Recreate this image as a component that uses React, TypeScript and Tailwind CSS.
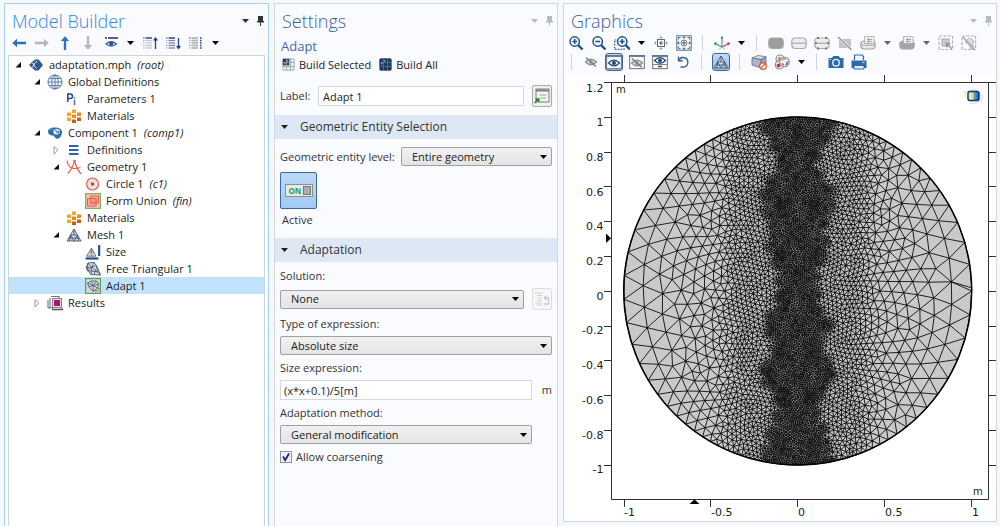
import type { ReactNode } from "react";

/* ---------- mesh generation ---------- */

type Pt = [number, number];

const CX = 797.7;
const CY = 291;
const R = 174;

function lerpTable(table: Pt[], v: number): number {
  if (v <= table[0][0]) return table[0][1];
  for (let i = 1; i < table.length; i++) {
    if (v <= table[i][0]) {
      const [a, fa] = table[i - 1];
      const [b, fb] = table[i];
      return fa + ((fb - fa) * (v - a)) / (b - a);
    }
  }
  return table[table.length - 1][1];
}

// Half width of the finely refined band, by height.
const BAND: Pt[] = [
  [-174, 38], [-150, 26], [-128, 15], [-118, 20], [-100, 34], [-85, 35], [-62, 24],
  [-40, 29], [-22, 18], [0, 19], [14, 17], [32, 32], [50, 22], [62, 24], [80, 36],
  [100, 26], [114, 17], [130, 22], [174, 36],
];

// Edge length outside the band, by distance from the vertical centre line.
const GRADE: Pt[] = [
  [0, 4.2], [60, 4.5], [70, 5.5], [78, 8], [115, 12.5], [145, 18], [174, 24],
];

function edgeLength(x: number, y: number): number {
  const d = Math.abs(x);
  const band = lerpTable(BAND, y) + 2.5 * Math.sin(y * 0.37 + Math.sign(x));
  const outer = lerpTable(GRADE, d);
  const inner = 2.1 + 0.25 * Math.sin(y * 0.13) * Math.cos(x * 0.2);
  if (d < band) return inner;
  if (d < band + 5) return inner + ((outer - inner) * (d - band)) / 5;
  return outer;
}

function seeded(seed: number) {
  let s = seed;
  return () => {
    s = (s * 1664525 + 1013904223) % 4294967296;
    return s / 4294967296;
  };
}

function samplePoints(): { pts: Pt[]; fixed: number } {
  const rand = seeded(7);
  const cell = 6;
  const grid = new Map<number, Pt[]>();
  const key = (x: number, y: number) => Math.floor((x + 200) / cell) * 1000 + Math.floor((y + 200) / cell);
  const pts: Pt[] = [];
  const add = (p: Pt) => {
    pts.push(p);
    const k = key(p[0], p[1]);
    const list = grid.get(k);
    if (list) list.push(p);
    else grid.set(k, [p]);
  };
  const free = (x: number, y: number, r: number) => {
    const n = Math.ceil(r / cell);
    for (let i = -n; i <= n; i++) {
      for (let j = -n; j <= n; j++) {
        const list = grid.get(key(x + i * cell, y + j * cell));
        if (!list) continue;
        for (const q of list) {
          if ((q[0] - x) ** 2 + (q[1] - y) ** 2 < r * r) return false;
        }
      }
    }
    return true;
  };
  let a = 0;
  while (a < Math.PI * 2 - 0.004) {
    const x = R * Math.cos(a);
    const y = R * Math.sin(a);
    add([x, y]);
    a += edgeLength(x, y) / R;
  }
  const fixed = pts.length;
  for (let head = 0; head < pts.length; head++) {
    const [px, py] = pts[head];
    const h = edgeLength(px, py);
    const start = rand() * Math.PI * 2;
    for (let k = 0; k < 24; k++) {
      const t = start + (k * Math.PI) / 12;
      const x = px + h * 1.01 * Math.cos(t);
      const y = py + h * 1.01 * Math.sin(t);
      if (Math.hypot(x, y) > R - h * 0.6) continue;
      if (free(x, y, Math.min(h, edgeLength(x, y)) * 0.95)) add([x, y]);
    }
  }
  return { pts, fixed };
}

interface Tri {
  a: number;
  b: number;
  c: number;
  x: number;
  y: number;
  r: number;
}

function circum(pts: Pt[], a: number, b: number, c: number): Tri {
  const [ax, ay] = pts[a];
  const bx = pts[b][0] - ax;
  const by = pts[b][1] - ay;
  const cx = pts[c][0] - ax;
  const cy = pts[c][1] - ay;
  const d = 2 * (bx * cy - by * cx) || 1e-9;
  const b2 = bx * bx + by * by;
  const c2 = cx * cx + cy * cy;
  const ux = (cy * b2 - by * c2) / d;
  const uy = (bx * c2 - cx * b2) / d;
  return { a, b, c, x: ax + ux, y: ay + uy, r: ux * ux + uy * uy };
}

// Sweeping Delaunay triangulation; returns the unique edges.
function triangulate(input: Pt[]): Pt[] {
  const n = input.length;
  const order = input.map((_, i) => i).sort((i, j) => input[i][1] - input[j][1]);
  const pts: Pt[] = [...input, [-9000, -4000], [9000, -4100], [0, 9000]];
  let open: Tri[] = [circum(pts, n, n + 1, n + 2)];
  const done: Tri[] = [];
  for (const i of order) {
    const [x, y] = pts[i];
    const edges = new Map<number, Pt>();
    const keep: Tri[] = [];
    for (const t of open) {
      const dy = y - t.y;
      if (dy > 0 && dy * dy > t.r) {
        done.push(t);
        continue;
      }
      const dx = x - t.x;
      if (dx * dx + dy * dy > t.r) {
        keep.push(t);
        continue;
      }
      const sides: Pt[] = [[t.a, t.b], [t.b, t.c], [t.c, t.a]];
      for (const [p, q] of sides) {
        const k = Math.min(p, q) * 20000 + Math.max(p, q);
        if (edges.has(k)) edges.delete(k);
        else edges.set(k, [p, q]);
      }
    }
    for (const [p, q] of edges.values()) keep.push(circum(pts, p, q, i));
    open = keep;
  }
  const unique = new Map<number, Pt>();
  for (const t of [...done, ...open]) {
    if (t.a >= n || t.b >= n || t.c >= n) continue;
    const sides: Pt[] = [[t.a, t.b], [t.b, t.c], [t.c, t.a]];
    for (const [p, q] of sides) {
      unique.set(Math.min(p, q) * 20000 + Math.max(p, q), [p, q]);
    }
  }
  return [...unique.values()];
}

function buildMesh(): string {
  const { pts, fixed } = samplePoints();
  let edges = triangulate(pts);
  for (let round = 0; round < 4; round++) {
    const sum = pts.map(() => [0, 0, 0]);
    for (const [p, q] of edges) {
      sum[p][0] += pts[q][0];
      sum[p][1] += pts[q][1];
      sum[p][2]++;
      sum[q][0] += pts[p][0];
      sum[q][1] += pts[p][1];
      sum[q][2]++;
    }
    for (let i = fixed; i < pts.length; i++) {
      if (sum[i][2] > 0) pts[i] = [sum[i][0] / sum[i][2], sum[i][1] / sum[i][2]];
    }
    edges = triangulate(pts);
  }
  return edges
    .map(([p, q]) => {
      const [x1, y1] = pts[p];
      const [x2, y2] = pts[q];
      return `M${(CX + x1).toFixed(1)} ${(CY + y1).toFixed(1)}L${(CX + x2).toFixed(1)} ${(CY + y2).toFixed(1)}`;
    })
    .join("");
}

const MESH = buildMesh();

/* ---------- icons ---------- */

function Svg({ children, size = 16 }: { children: ReactNode; size?: 16 | 13 }) {
  return (
    <svg viewBox="0 0 16 16" className={size === 16 ? "size-4 shrink-0" : "size-[13px] shrink-0"} fill="none" aria-hidden="true">
      {children}
    </svg>
  );
}

function Caret({ className = "text-black" }: { className?: string }) {
  return (
    <svg viewBox="0 0 7 4" className={`h-1 w-[7px] shrink-0 ${className}`} aria-hidden="true">
      <path d="M0 0h7L3.5 4z" fill="currentColor" />
    </svg>
  );
}

function Pin() {
  return (
    <svg viewBox="0 0 7 10" className="h-2.5 w-[7px]" aria-hidden="true">
      <path d="M1 0h5v5h1v1.5H4V10H3V6.500H0V5h1z" fill="currentColor" />
    </svg>
  );
}

const Arrow = ({ turn, color }: { turn: number; color: string }) => (
  <Svg>
    <g transform={`rotate(${turn} 8 8)`} fill={color}>
      <path d="M1.200 8L6 3.800v3h9v2.400H6v3z" />
    </g>
  </Svg>
);

const EyeMenu = () => (
  <Svg>
    <path d="M2 3h2M5 3h10" stroke="#1c2c78" strokeWidth="1.600" />
    <path d="M3 9q5-4.500 10.500 0q-5.500 4-10.500 0z" stroke="#3d6290" strokeWidth="1.300" fill="#dfe9f5" />
    <circle cx="8.200" cy="8.800" r="2" fill="#24508a" />
  </Svg>
);

const ListArrow = ({ kind }: { kind: "up" | "down" | "cols" }) => (
  <Svg>
    {[3, 5.500, 8, 10.500, 13].map((y, i) => (
      <g key={y}>
        <path d={`M1 ${y}h1.500`} stroke={i === 0 ? "#2a3a86" : "#a5abc0"} strokeWidth="1" />
        <path
          d={`M3.500 ${y}h6.500`}
          stroke={kind === "cols" ? "#b5b5b5" : i === 0 ? "#1c2c78" : kind === "down" ? "#7d84a6" : "#c3c5d0"}
          strokeWidth={kind === "cols" ? 1.800 : 1.300}
        />
        {kind === "cols" && <path d={`M12 ${y}h1.500`} stroke="#2a3a86" strokeWidth="1.300" />}
      </g>
    ))}
    {kind === "up" && <path d="M13.500 14V3.500M11.700 5.500l1.800-2.500 1.800 2.500" stroke="#23427e" strokeWidth="1.300" />}
    {kind === "down" && <path d="M13.500 3v10M11.700 11l1.800 2.500 1.800-2.500" stroke="#23427e" strokeWidth="1.300" />}
  </Svg>
);

const RootIcon = () => (
  <Svg>
    <path d="M1 8L7 2.500h3.500L15 8l-4.500 5.500H7z" fill="#2f5791" />
    <path d="M3.800 6L6.500 8 4 10.300M8 4.500L12 8 8.500 11.500 5.500 8z" stroke="#dfe8f5" strokeWidth="1" />
    <path d="M9 5l4 3-4 3.500L6.800 8z" fill="#2f5791" />
  </Svg>
);

const GlobeIcon = () => (
  <Svg>
    <circle cx="8" cy="8" r="7" stroke="#5577a5" strokeWidth="1" fill="#f2f7fc" />
    <ellipse cx="8" cy="8" rx="3.200" ry="7" stroke="#5577a5" strokeWidth=".9" />
    <path d="M8 1v14M1 8h14M2.200 4.500h11.600M2.200 11.500h11.600" stroke="#5577a5" strokeWidth=".9" />
  </Svg>
);

const ParamsIcon = () => (
  <Svg>
    <path d="M1.800 11V3h2.400a2.200 2.200 0 010 4.600H1.800" stroke="#1f4583" strokeWidth="1.500" />
    <path d="M8.500 8.800V14M8.500 6.300v1.400" stroke="#4a6da3" strokeWidth="1.500" />
  </Svg>
);

const MaterialsIcon = () => (
  <Svg>
    <path d="M1 4.500h4v3.500H1zM6 1.500h4V5H6zM1 9.500h4V13H1z" fill="#f5a52a" />
    <path d="M6 6.500h4V10H6zM11 4.500h4v3.500h-4z" fill="#ef8a1d" />
    <path d="M11 9.500h4V13h-4zM6 11.500h4V15H6z" fill="#cf5a14" />
  </Svg>
);

const ComponentIcon = () => (
  <Svg>
    <path d="M1 6.500C1 3.500 5 2 9 2.500c4 .3 6.500 2.500 6 5.500-.4 3-2.500 6-5 5.800C7.500 13.500 8 11 6 10.500 3 10.500 1 9 1 6.500z" fill="#2e6da8" />
    <path d="M6.500 5l3.200-1.200 3 1v3.600l-3 1.400-3.200-1z" fill="#e4eef8" />
    <path d="M8 5.500l2 .5v2.500M11.500 5.800v2.500" stroke="#2e6da8" strokeWidth="1" />
    <path d="M3 5.500q1-1.500 2.500-1.700" stroke="#8fbbe0" strokeWidth="1" />
  </Svg>
);

const DefinitionsIcon = () => (
  <Svg>
    <path d="M3 4h9.500M3 8h9.500M3 12h9.500" stroke="#2d62a3" strokeWidth="1.800" />
  </Svg>
);

const GeometryIcon = () => (
  <Svg>
    <path d="M1 1.500C2 7 5 9.500 8 9.500s5-.5 6.500-1M8.500 1.500c-1 5-3.500 9.500-6.500 13M8.500 1.500C10 7 12 12 15 15" stroke="#e2604c" strokeWidth="1.200" />
    <circle cx="8.500" cy="2" r="1.200" fill="#e2604c" />
  </Svg>
);

const CircleIcon = () => (
  <Svg>
    <circle cx="7.500" cy="8" r="6" fill="#e4e1e1" stroke="#e2604c" strokeWidth="1.200" />
    <circle cx="7.500" cy="8" r="1.700" fill="#dd3318" />
  </Svg>
);

const UnionIcon = () => (
  <Svg>
    <rect x=".6" y=".6" width="14.800" height="14.800" fill="#f8c4b4" stroke="#7fae66" strokeWidth="1.200" />
    <path d="M2.500 5.500h8.500v7.500H2.500zM5.500 3h8v7h-8z" stroke="#e2604c" strokeWidth="1" fill="#f5ad9b" />
    <path d="M5.500 5.500V10H11V5.500z" stroke="#e2604c" strokeWidth="1" fill="#f39a86" />
  </Svg>
);

const TRIANGLE = "M8 2l7 12H1zM4.500 8h7M4.500 8L8 14l3.500-6M8 2v6M4.500 8L3.800 14M11.500 8l1 6M3 11h10";

const MeshIcon = () => (
  <Svg>
    <path d="M8 2l7 12H1z" fill="#d8dde4" />
    <path d={TRIANGLE} stroke="#41566f" strokeWidth=".9" />
  </Svg>
);

const SizeIcon = () => (
  <Svg>
    <path d="M6.500 4l4.500 8.200H1.500z" fill="#d8d8d8" stroke="#777" strokeWidth="1" />
    <path d="M6.500 5v7M4.300 8h4.500" stroke="#777" strokeWidth=".8" />
    <path d="M14.200 1v11" stroke="#255a9c" strokeWidth="2.200" />
    <path d="M.5 14.500h13" stroke="#255a9c" strokeWidth="2.200" />
    <path d="M13 3h1M13 6h1M13 9h1M3 14v1M6 14v1M9 14v1" stroke="#0b2448" strokeWidth="1" />
  </Svg>
);

const FreeTriIcon = () => (
  <Svg>
    <path d="M1 7l2-5 6-.5 2.500 3L15.500 14 6 13.500z" fill="#dde2e8" stroke="#4a6079" strokeWidth="1" />
    <path d="M1 7l6-1 4.500-1.500M3 2l4 4 2-4.500M7 6l-1 7.500M7 6l8.500 8M3 2l-.5 8L7 6M2.500 9.500l10 1.500L11.500 5M9 13.500l1.500-5" stroke="#4a6079" strokeWidth=".9" />
  </Svg>
);

const AdaptIcon = () => (
  <Svg>
    <rect x=".6" y=".6" width="14.800" height="14.800" fill="#d3dbe0" stroke="#5da14a" strokeWidth="1.200" />
    <path d="M2.500 5l4-2h5l2 3-1 4-4.500 3.500-4-4.500zM2.500 5L8 7.500 6.500 3M8 7.500L11.500 3M8 7.500l5.500-1.500M8 7.500V13.500M8 7.500L4 9M8 7.500l4.500 2.500" stroke="#50646f" strokeWidth=".9" />
    <path d="M10 13a3 3 0 004-3" stroke="#50646f" strokeWidth="1" />
  </Svg>
);

const ResultsIcon = () => (
  <Svg>
    <path d="M1 5v7.500l2 1M3 3v9.500h2M4 1.500h8v2H5.500V14" stroke="#777" strokeWidth="1.100" />
    <rect x="5.500" y="3.500" width="9" height="9" fill="#ddd" stroke="#888" strokeWidth="1" />
    <rect x="7" y="5" width="6" height="6" fill="#b0127b" />
    <path d="M5 14.500h10.500V13" stroke="#555" strokeWidth="1.300" />
  </Svg>
);

const BuildIcon = ({ all = false }: { all?: boolean }) => (
  <Svg size={13}>
    <rect x="1" y="1" width="14" height="14" rx="1" fill={all ? "#1b3a5c" : "#e9ebee"} stroke={all ? "#23384f" : "#9aa3ad"} strokeWidth="1" />
    <path d="M1 1h8v8H1z" fill="#1d3c5e" />
    <path d="M5.500 1v14M10.500 1v14M1 5.500h14M1 10.500h14" stroke={all ? "#54779c" : "#98a4b0"} strokeWidth="1" />
    <path d="M2.500 7h2M7 2.500v2" stroke="#a8c6e2" strokeWidth="1.200" />
  </Svg>
);

const Zoom = ({ kind }: { kind: "in" | "out" | "box" }) => (
  <Svg>
    {kind === "box" && <path d="M5 5H.700v9.300H10V12" stroke="#24508a" strokeWidth="1.200" strokeDasharray="1.500 1.300" />}
    <g transform={kind === "box" ? "translate(1.500 0)" : undefined}>
      <path d="M10 10l4.500 4.500" stroke="#1d4f92" strokeWidth="2.400" />
      <circle cx="6.700" cy="6.500" r="4.700" stroke="#234f88" strokeWidth="1.500" fill="#f2f7fd" />
      <path d={kind === "out" ? "M4.300 6.500h4.800" : "M4.300 6.500h4.800M6.700 4.100v4.800"} stroke="#1d4f92" strokeWidth="1.500" />
    </g>
  </Svg>
);

const Extents = ({ boxed = false }: { boxed?: boolean }) => (
  <Svg>
    {boxed ? (
      <>
        <rect x=".8" y=".8" width="14.400" height="14.400" stroke="#666" strokeWidth="1" />
        <circle cx="8" cy="8" r="3" stroke="#777" strokeWidth="1" />
      </>
    ) : (
      <rect x="4.500" y="4.500" width="7" height="7" stroke="#666" strokeWidth="1" />
    )}
    <path d="M8 6v4M6 8h4" stroke="#555" strokeWidth="1" />
    <path d="M8 1l2 2.200H6zM8 15l-2-2.200h4zM1 8l2.200-2v4zM15 8l-2.200 2V6z" fill={boxed ? "#2e78bd" : "#7aa6cf"} />
    {boxed && <path d="M2.500 2.500h2M2.500 2.500v2M13.500 2.500h-2M13.500 2.500v2M2.500 13.500h2M2.500 13.500v-2M13.500 13.500h-2M13.500 13.500v-2" stroke="#2e78bd" strokeWidth="1.100" />}
  </Svg>
);

const AxesIcon = () => (
  <Svg>
    <path d="M8 11.500V2" stroke="#5a86c0" strokeWidth="1.100" />
    <path d="M8 1l1.300 2.500H6.700z" fill="#2b62ad" />
    <path d="M8 12l6-3" stroke="#d2356c" strokeWidth="1.100" />
    <path d="M8 12L2 9" stroke="#37a048" strokeWidth="1.100" />
    <circle cx="14.500" cy="8.700" r="1.400" fill="#d2356c" />
    <circle cx="1.500" cy="8.700" r="1.400" fill="#37a048" />
    <path d="M5 14.500l3-2.500 3 2.500" stroke="#7fb98a" strokeWidth=".8" />
  </Svg>
);

const Pill = ({ kind }: { kind: "solid" | "line" | "edges" }) => (
  <Svg>
    <rect x=".8" y="3" width="14.400" height="10.500" rx="3.500" fill={kind === "solid" ? "#9d9d9d" : "#eeeeef"} stroke="#a9a9a9" strokeWidth="1.200" />
    {kind !== "solid" && <path d="M1 8.200h14" stroke="#a9a9a9" strokeWidth="1.200" />}
    {kind === "edges" && <path d="M3 3h2M11 3h2M3 13.500h2M11 13.500h2M1 8.200h2M13 8.200h2" stroke="#777" strokeWidth="1.800" />}
  </Svg>
);

const SlashBox = () => (
  <Svg>
    <path d="M2 4h12v9H2z" fill="#c3c3c3" />
    <path d="M1 2l13.500 13" stroke="#f7f9fd" strokeWidth="2.500" />
    <path d="M1 2l13.500 13" stroke="#8c8c8c" strokeWidth="1.100" />
  </Svg>
);

const PillBox = ({ dark = false }: { dark?: boolean }) => (
  <Svg>
    <rect x=".8" y="6" width="14.400" height="8" rx="3.500" fill={dark ? "#a5a5a5" : "#e9e9ea"} stroke="#a4a4a4" strokeWidth="1.200" />
    {!dark && <path d="M1 10.200h14" stroke="#a4a4a4" strokeWidth="1" />}
    <rect x="4.500" y="1.500" width="9.500" height="7" fill="#efeff0" stroke="#a0a0a0" strokeWidth="1" strokeDasharray="2 1" />
    <path d="M7 4.500h5M7 6.500h5M8.500 3v5" stroke="#a8a8a8" strokeWidth="1" />
  </Svg>
);

const DashedSelect = ({ cut = false }: { cut?: boolean }) => (
  <Svg>
    <rect x="1" y="1" width="13.500" height="13.500" stroke="#b0b0b0" strokeWidth="1.200" strokeDasharray="3 1.500" />
    {cut ? (
      <>
        <path d="M4 7q4 1 6 7h2V5L8 3z" fill="#dcdcdc" stroke="#b5b5b5" strokeWidth="1" />
        <path d="M2 2l12 13" stroke="#a5a5a5" strokeWidth="1.200" />
      </>
    ) : (
      <>
        <rect x="4" y="4" width="7" height="7" fill="#cfcfcf" stroke="#a5a5a5" strokeWidth="1" />
        <path d="M7 7l1.500 6 1.600-2 3.400 3.500 1-1-3.500-3.400 2-1.600z" fill="#9a9a9a" />
      </>
    )}
  </Svg>
);

const EyeShape = ({ y = 8, slash = false }: { y?: number; slash?: boolean }) => (
  <>
    <path d={`M2.500 ${y}q5.500-5.600 11 0q-5.500 5.600-11 0z`} fill={slash ? "#dcdcdc" : "#fff"} stroke={slash ? "#8e8e8e" : "#24446e"} strokeWidth="1.200" />
    <circle cx="8" cy={y} r="2" fill={slash ? "#a3a3a3" : "#1c4a86"} />
    {slash && <path d={`M3 ${y - 4.500}l10 9`} stroke="#777" strokeWidth="1.200" />}
  </>
);

const WindowEye = ({ kind }: { kind: "on" | "slash" | "split" }) => (
  <Svg>
    <rect x=".6" y="1.600" width="14.800" height="13" fill="#f6f8fb" stroke="#7b828c" strokeWidth="1.100" />
    <path d="M0 2h16" stroke="#5a7596" strokeWidth="1.800" />
    {kind === "split" ? (
      <>
        <EyeShape y={6.500} />
        <path d="M1 10.500h14" stroke="#777" strokeWidth=".9" />
        <path d="M6 12.500h4" stroke="#555" strokeWidth="1.600" />
      </>
    ) : (
      <EyeShape y={9} slash={kind === "slash"} />
    )}
  </Svg>
);

const ResetIcon = () => (
  <Svg>
    <path d="M3.800 6.500A4.700 4.700 0 118 13H5.500" stroke="#3a6496" strokeWidth="1.400" />
    <path d="M3.500 2.500v4.300h4.300" stroke="#3a6496" strokeWidth="1.400" />
  </Svg>
);

const CubeIcon = () => (
  <Svg>
    <path d="M1 4l6-2.500 8 1.300-5 2.700z" fill="#dfe3e8" stroke="#717983" strokeWidth=".9" />
    <path d="M1 4l9 1.500V14L1 11z" fill="#aab6c5" stroke="#717983" strokeWidth=".9" />
    <path d="M10 5.500l5-2.700v7L10 14z" fill="#86a9d3" stroke="#717983" strokeWidth=".9" />
    <circle cx="12" cy="12" r="3.300" fill="#fff" stroke="#e0583a" strokeWidth="1.400" />
    <path d="M9.700 14.200l4.600-4.400" stroke="#e0583a" strokeWidth="1.300" />
  </Svg>
);

const PaletteIcon = () => (
  <Svg>
    <circle cx="6" cy="5" r="4" fill="#eceef0" stroke="#8a8a8a" strokeWidth="1.100" />
    <circle cx="5.500" cy="10.800" r="4.200" fill="#f3eef1" stroke="#8a8a8a" strokeWidth="1.100" />
    <circle cx="10.500" cy="8" r="4.800" fill="#f1f4f7" stroke="#8a8a8a" strokeWidth="1.100" />
    <circle cx="5.500" cy="4.500" r="1.500" fill="#888" />
    <circle cx="4.500" cy="11.500" r="1.900" fill="#d2287e" />
    <path d="M8 6.500a3 3 0 014-1.200" stroke="#e89a3c" strokeWidth="1.800" />
    <path d="M13.300 7.500a3 3 0 01-2 3.500" stroke="#3c8bd0" strokeWidth="1.800" />
    <path d="M8 9a3 3 0 002 2" stroke="#e2603c" strokeWidth="1.600" />
  </Svg>
);

const CameraIcon = () => (
  <Svg>
    <path d="M.5 4H4l1.200-2h5.600L12 4h3.500v10H.5z" fill="#2a69ad" />
    <circle cx="8" cy="8.700" r="3.300" fill="#2a69ad" stroke="#e8f1fa" strokeWidth="1.400" />
    <path d="M1.500 5.500H3" stroke="#dbe8f5" strokeWidth="1" />
  </Svg>
);

const PrinterIcon = () => (
  <Svg>
    <path d="M3.500 6V1h7.500l1.500 1.500V6" fill="#f4f8fc" stroke="#2a69ad" strokeWidth="1.200" />
    <path d="M.5 6.500h15V14H.5z" fill="#2a69ad" />
    <path d="M3 11.500h10V15H3z" fill="#e7eef7" stroke="#2a69ad" strokeWidth="1" />
    <path d="M11.500 8.500h2" stroke="#e7eef7" strokeWidth="1" />
  </Svg>
);

const RenameIcon = () => (
  <Svg>
    <rect x="2" y="1" width="13" height="13" fill="#f4f4f4" stroke="#7c7c7c" strokeWidth="1" />
    <path d="M2 2.500h13" stroke="#7c7c7c" strokeWidth="2" />
    <path d="M5.500 7h7M5.500 10h7" stroke="#7dbb7d" strokeWidth="1.200" />
    <path d="M.5 15l4-4M1.500 11H4.700V14" stroke="#1d7d25" strokeWidth="1.300" />
  </Svg>
);

const SourceIcon = () => (
  <Svg>
    <path d="M1 2h8M3 4.500h5M3 7h5M3 9.500h5M1 12h7M3 14h5" stroke="#d2d2d4" strokeWidth="1.200" />
    <path d="M10 7h4.500v6H10M10 7l2-2M10 7l2 2" stroke="#cbcbce" strokeWidth="1.300" />
  </Svg>
);

/* ---------- shared controls ---------- */

function Panel({ title, active = false, short = false, children }: { title: string; active?: boolean; short?: boolean; children: ReactNode }) {
  const frame = active ? "border-[#a9d0f5]" : "border-[#d3d6dc]";
  return (
    <section className={`flex min-w-0 flex-col border bg-[#fafbff] ${frame} ${short ? "mb-1 self-start border-b" : "border-b-0"}`}>
      <header className="flex h-[29px] items-center pt-1 pr-1 pl-[7px]">
        <h2 className={`flex-1 font-['Open_Sans'] text-lg leading-6 font-light ${active ? "text-[#2f8ae6]" : "text-[#3d5f9f]"}`}>{title}</h2>
        <div className={`flex items-center gap-1.5 ${active ? "text-[#333]" : "text-[#b4bcca]"}`}>
          <button type="button" aria-label={`${title} menu`} className="p-0.5">
            <Caret className="" />
          </button>
          <button type="button" aria-label={`Pin ${title}`}>
            <Pin />
          </button>
        </div>
      </header>
      {children}
    </section>
  );
}

function Tool({ label, on = false, children }: { label: string; on?: boolean; children: ReactNode }) {
  const look = on ? "rounded-xs bg-linear-to-b from-[#c3daf5] to-[#8fbbec] outline outline-[#41669a]" : "";
  return (
    <span className="flex w-[23px] shrink-0 justify-center">
      <button type="button" aria-label={label} aria-pressed={on || undefined} className={`flex size-4 items-center justify-center ${look}`}>
        {children}
      </button>
    </span>
  );
}

function Drop({ label, dim = false }: { label: string; dim?: boolean }) {
  return (
    <button type="button" aria-label={label} className="flex w-4 shrink-0 justify-center">
      <Caret className={dim ? "text-[#666]" : "text-black"} />
    </button>
  );
}

const Sep = () => (
  <span className="flex w-[15px] shrink-0 justify-center">
    <span className="h-4 w-px bg-[#d0d3d8]" />
  </span>
);

function Choice({ id, value, className }: { id: string; value: string; className: string }) {
  return (
    <div className={`relative ${className}`}>
      <select
        id={id}
        defaultValue={value}
        className="block h-[19px] w-full appearance-none rounded-xs border border-[#a0a0a0] bg-linear-to-b from-[#f1f1f1] to-[#e4e4e4] pr-5 pl-2.5 text-[#222]"
      >
        <option>{value}</option>
      </select>
      <span className="pointer-events-none absolute inset-y-0 right-[5px] flex items-center">
        <Caret />
      </span>
    </div>
  );
}

function SectionHead({ children }: { children: ReactNode }) {
  return (
    <h3 className="h-6 bg-[#dee8f5]">
      <button type="button" aria-expanded="true" className="flex size-full items-center gap-3 pl-1.5 text-left text-xs text-[#333]">
        <Caret className="text-[#222]" />
        {children}
      </button>
    </h3>
  );
}

/* ---------- model tree ---------- */

interface Node {
  level: 0 | 1 | 2 | 3;
  icon: ReactNode;
  text: string;
  tag?: string;
  state?: "open" | "closed";
  selected?: boolean;
}

const NODES: Node[] = [
  { level: 0, icon: <RootIcon />, text: "adaptation.mph", tag: "(root)", state: "open" },
  { level: 1, icon: <GlobeIcon />, text: "Global Definitions", state: "open" },
  { level: 2, icon: <ParamsIcon />, text: "Parameters 1" },
  { level: 2, icon: <MaterialsIcon />, text: "Materials" },
  { level: 1, icon: <ComponentIcon />, text: "Component 1", tag: "(comp1)", state: "open" },
  { level: 2, icon: <DefinitionsIcon />, text: "Definitions", state: "closed" },
  { level: 2, icon: <GeometryIcon />, text: "Geometry 1", state: "open" },
  { level: 3, icon: <CircleIcon />, text: "Circle 1", tag: "(c1)" },
  { level: 3, icon: <UnionIcon />, text: "Form Union", tag: "(fin)" },
  { level: 2, icon: <MaterialsIcon />, text: "Materials" },
  { level: 2, icon: <MeshIcon />, text: "Mesh 1", state: "open" },
  { level: 3, icon: <SizeIcon />, text: "Size" },
  { level: 3, icon: <FreeTriIcon />, text: "Free Triangular 1" },
  { level: 3, icon: <AdaptIcon />, text: "Adapt 1", selected: true },
  { level: 1, icon: <ResultsIcon />, text: "Results", state: "closed" },
];

const INDENT = ["pl-[3px]", "pl-[22px]", "pl-[41px]", "pl-[60px]"];

function TreeRow({ node }: { node: Node }) {
  return (
    <li
      role="treeitem"
      aria-level={node.level + 1}
      aria-selected={Boolean(node.selected)}
      className={`flex h-[17px] items-center ${INDENT[node.level]} ${node.selected ? "bg-[#c0e2ff]" : ""}`}
    >
      <svg viewBox="0 0 16 16" className="size-4 shrink-0" aria-hidden="true">
        {node.state === "open" && <path d="M9 5v5.500H3.500z" fill="#111" />}
        {node.state === "closed" && <path d="M4 4.500L8 8.200 4 12z" fill="#fff" stroke="#999" />}
      </svg>
      {node.icon}
      <span className="ml-[5px] whitespace-pre">
        {node.text}
        {node.tag && <em className="ml-1.5">{node.tag}</em>}
      </span>
    </li>
  );
}

function ModelBuilder() {
  return (
    <Panel title="Model Builder" active>
      <div className="flex h-[19px] items-center pl-0.5" role="toolbar" aria-label="Model Builder">
        <Tool label="Previous"><Arrow turn={0} color="#2f72b5" /></Tool>
        <Tool label="Next"><Arrow turn={180} color="#b4b6ba" /></Tool>
        <Tool label="Up"><Arrow turn={90} color="#2f72b5" /></Tool>
        <Tool label="Down"><Arrow turn={270} color="#b4b6ba" /></Tool>
        <Tool label="Show"><EyeMenu /></Tool>
        <Drop label="Show options" />
        <Tool label="Collapse all"><ListArrow kind="up" /></Tool>
        <Tool label="Expand all"><ListArrow kind="down" /></Tool>
        <Tool label="Node text"><ListArrow kind="cols" /></Tool>
        <Drop label="Node text options" />
      </div>
      <ul role="tree" aria-label="Model tree" className="mx-[3px] mt-[3px] flex-1 border border-b-0 border-[#cfd3da] bg-white text-[#222]">
        {NODES.map((node, i) => (
          <TreeRow key={i} node={node} />
        ))}
      </ul>
    </Panel>
  );
}

/* ---------- settings ---------- */

function Settings() {
  return (
    <Panel title="Settings">
      <p className="pt-1 pl-1.5 text-[13px] leading-[18px] text-[#4268a8]">Adapt</p>
      <div className="flex h-[19px] items-center gap-2 pl-[7px] text-[#222]">
        <button type="button" className="flex items-center gap-1">
          <BuildIcon />
          Build Selected
        </button>
        <button type="button" className="flex items-center gap-1">
          <BuildIcon all />
          Build All
        </button>
      </div>
      <div className="mt-[11px] flex h-[22px] items-center pr-[5px] pl-[5px]">
        <label htmlFor="label" className="w-[38px]">Label:</label>
        <input id="label" defaultValue="Adapt 1" className="h-5 min-w-0 flex-1 border border-[#d5d8dd] bg-white px-1 text-[#222]" />
        <button type="button" aria-label="Rename" className="ml-2 flex h-[22px] w-5 items-center justify-center rounded-xs border border-[#a9a9a9] bg-[#f0f0f0]">
          <RenameIcon />
        </button>
      </div>

      <div className="mt-2">
        <SectionHead>Geometric Entity Selection</SectionHead>
        <div className="px-[5px] pt-2">
          <div className="flex items-center justify-between">
            <label htmlFor="level">Geometric entity level:</label>
            <Choice id="level" value="Entire geometry" className="w-[151px]" />
          </div>
          <button type="button" aria-label="Active" aria-pressed="true" className="mt-1.5 flex size-[37px] items-center justify-center rounded-xs border border-[#41669a] bg-linear-to-b from-[#b9daf8] to-[#a0cbf4]">
            <span className="flex h-[13px] w-7 items-center justify-between border border-[#8d8d8d] bg-[#e6ebe8] px-px text-[8px] leading-none font-bold text-[#2f9b45]">
              <span className="pl-0.5">ON</span>
              <span className="h-[9px] w-2 border border-[#777] bg-[#aaa]" />
            </span>
          </button>
          <p className="pt-0.5 pl-0.5 leading-[18px]">Active</p>
        </div>
      </div>

      <div className="mt-[9px]">
        <SectionHead>Adaptation</SectionHead>
        <div className="px-[5px] pt-[5px]">
          <label htmlFor="solution" className="block h-[21px] leading-[18px]">Solution:</label>
          <div className="flex h-[22px] items-center gap-2">
            <Choice id="solution" value="None" className="flex-1" />
            <button type="button" disabled aria-label="Go to source" className="flex h-[22px] w-5 items-center justify-center rounded-xs border border-[#dcdde0] bg-[#f7f7f9]">
              <SourceIcon />
            </button>
          </div>
          <label htmlFor="type" className="mt-[5px] block h-[21px] leading-[18px]">Type of expression:</label>
          <Choice id="type" value="Absolute size" className="" />
          <label htmlFor="size" className="mt-1 block h-[21px] leading-[18px]">Size expression:</label>
          <div className="flex items-center gap-2">
            <input id="size" defaultValue="(x*x+0.1)/5[m]" className="h-5 min-w-0 flex-1 border border-[#d5d8dd] bg-white px-[3px] text-[#222]" />
            <span className="w-3 text-right">m</span>
          </div>
          <label htmlFor="method" className="mt-1 block h-[21px] leading-[18px]">Adaptation method:</label>
          <Choice id="method" value="General modification" className="mr-5" />
          <label className="mt-1 flex h-[18px] items-center gap-1">
            <span className="relative flex size-3">
              <input type="checkbox" defaultChecked className="peer size-3 appearance-none border border-[#8e939c] bg-[#f0f0f0]" />
              <svg viewBox="0 0 12 12" className="pointer-events-none absolute inset-0 hidden size-3 peer-checked:block" fill="none" aria-hidden="true">
                <path d="M3 5.500l2.200 3.700L9 2.500" stroke="#16208a" strokeWidth="1.800" />
              </svg>
            </span>
            Allow coarsening
          </label>
        </div>
      </div>
    </Panel>
  );
}

/* ---------- graphics ---------- */

const Y_TICKS = ["1.2", "1", "0.8", "0.6", "0.4", "0.2", "0", "-0.2", "-0.4", "-0.6", "-0.8", "-1"];
const X_TICKS = ["-1", "-0.5", "0", "0.5", "1"];

function Plot() {
  return (
    <svg viewBox="564 75 432 446" className="mt-[3px] block h-auto w-full bg-white font-['DejaVu_Sans',sans-serif] text-[11px]" role="img" aria-label="Mesh plot">
      <g stroke="#333" strokeWidth="1" fill="none">
        <path d="M604 82.500H996M611.500 82.500V499.500H988.500V82.500" />
        {Y_TICKS.map((t, i) => {
          const y = Math.round(82 + i * 34.8) + 0.5;
          return <path key={t} d={`M604 ${y}h7M989 ${y}h7`} />;
        })}
        {X_TICKS.map((t, i) => {
          const x = Math.round(623.500 + i * 86.900) + 0.5;
          return <path key={t} d={`M${x} 75v7M${x} 500v7`} />;
        })}
      </g>
      <g fill="#222">
        {Y_TICKS.map((t, i) => (
          <text key={t} x="603.500" y={Math.round(91.500 + i * 34.7)} textAnchor="end">{t}</text>
        ))}
        {X_TICKS.map((t, i) => (
          <text key={t} x={Math.round(623.500 + i * 87)} y="516">{t}</text>
        ))}
        <text x="616" y="93" fontSize="10">m</text>
        <text x="973" y="495" fontSize="10">m</text>
      </g>
      <path d="M606 233.500l5 4.700-5 4.700zM689.500 504h10l-5-4.500z" fill="#000" />
      <circle cx={CX} cy={CY} r={R} fill="#c9c9c9" />
      <path d={MESH} stroke="#000" strokeWidth=".85" fill="none" />
      <circle cx={CX} cy={CY} r={R} fill="none" stroke="#000" strokeWidth="1.500" />
      <g>
        <path d="M964 92l11-3 8 7-2 6-10 2z" fill="#f1f1f1" stroke="#ddd" strokeWidth=".8" />
        <defs>
          <linearGradient id="logo" x1="0" x2="1">
            <stop offset="0" stopColor="#f7ef7a" />
            <stop offset=".4" stopColor="#d8e690" />
            <stop offset=".6" stopColor="#4aa3d8" />
            <stop offset="1" stopColor="#1a4fd0" />
          </linearGradient>
        </defs>
        <rect x="968" y="91.500" width="11" height="9" rx="2" fill="url(#logo)" stroke="#14317c" strokeWidth="1.400" />
      </g>
    </svg>
  );
}

function Graphics() {
  return (
    <Panel title="Graphics" short>
      <div className="flex h-[19px] items-center" role="toolbar" aria-label="View">
        <Tool label="Zoom in"><Zoom kind="in" /></Tool>
        <Tool label="Zoom out"><Zoom kind="out" /></Tool>
        <Tool label="Zoom box"><Zoom kind="box" /></Tool>
        <Drop label="Zoom options" />
        <Tool label="Zoom to selection"><Extents /></Tool>
        <Tool label="Zoom extents"><Extents boxed /></Tool>
        <Sep />
        <Tool label="Default view"><AxesIcon /></Tool>
        <Drop label="View options" />
        <Sep />
        <Tool label="Select domains"><Pill kind="solid" /></Tool>
        <Tool label="Select boundaries"><Pill kind="line" /></Tool>
        <Tool label="Select points"><Pill kind="edges" /></Tool>
        <Tool label="Disable selection"><SlashBox /></Tool>
        <Tool label="Select box"><PillBox /></Tool>
        <Drop label="Select box options" dim />
        <Tool label="Deselect box"><PillBox dark /></Tool>
        <Drop label="Deselect box options" dim />
        <Tool label="Select all"><DashedSelect /></Tool>
        <Tool label="Clear selection"><DashedSelect cut /></Tool>
      </div>
      <div className="flex h-5 items-center" role="toolbar" aria-label="Visibility">
        <Sep />
        <Tool label="Click and hide"><Svg><EyeShape slash /></Svg></Tool>
        <Tool label="View unhidden" on><WindowEye kind="on" /></Tool>
        <Tool label="View hidden only"><WindowEye kind="slash" /></Tool>
        <Tool label="View all"><WindowEye kind="split" /></Tool>
        <Tool label="Reset hiding"><ResetIcon /></Tool>
        <Sep />
        <Tool label="Mesh rendering" on><MeshIcon /></Tool>
        <Sep />
        <Tool label="Transparency"><CubeIcon /></Tool>
        <Tool label="Colours"><PaletteIcon /></Tool>
        <Drop label="Colour options" />
        <Sep />
        <Tool label="Image snapshot"><CameraIcon /></Tool>
        <Tool label="Print"><PrinterIcon /></Tool>
      </div>
      <Plot />
    </Panel>
  );
}

export default function App() {
  return (
    <main className="grid min-h-screen grid-cols-[265fr_284fr_434fr] gap-[5px] bg-[#f5f8fd] pt-[3px] pr-[3px] pl-1 font-['Open_Sans','Noto_Sans',sans-serif] text-[11px] leading-4 text-[#333]">
      <ModelBuilder />
      <Settings />
      <Graphics />
    </main>
  );
}
